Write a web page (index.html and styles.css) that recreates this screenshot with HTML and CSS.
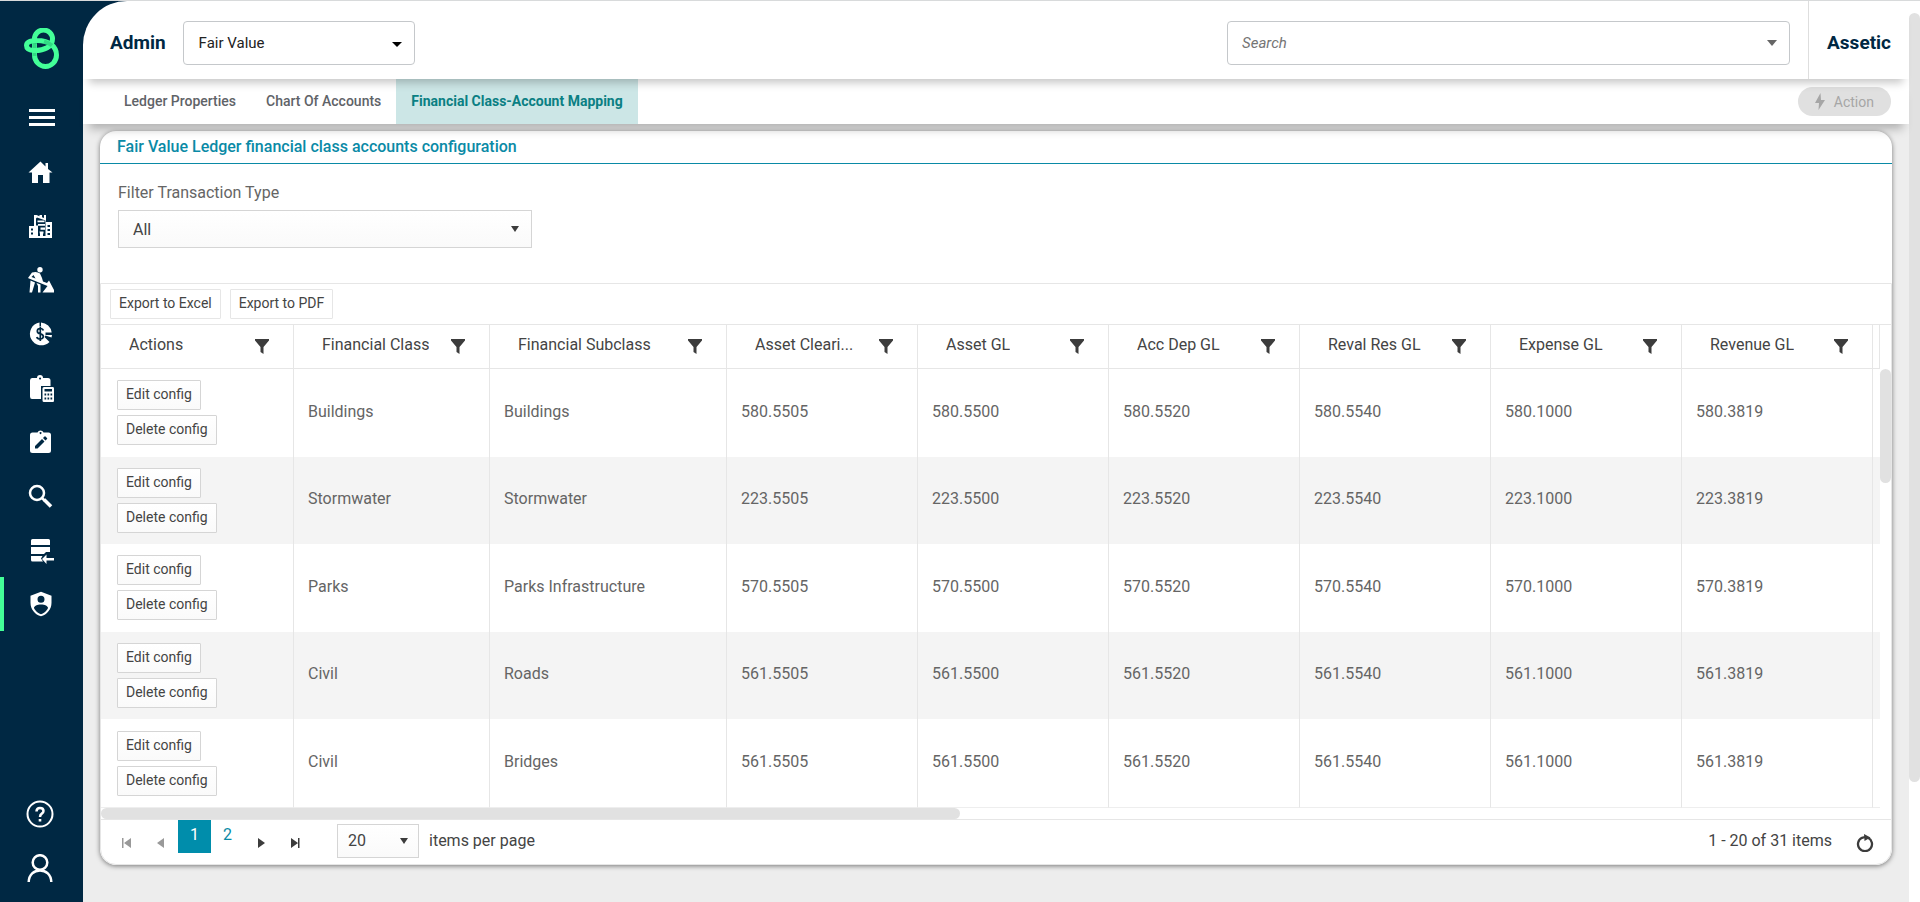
FILE: index.html
```html
<!DOCTYPE html>
<html lang="en">
  <head>
    <meta charset="utf-8" />
    <meta name="viewport" content="width=device-width, initial-scale=1" />
    <title>Assetic - Financial Class-Account Mapping</title>
    <link rel="stylesheet" href="styles.css">
  </head>

  <body>
    <aside class="sidebar">
      <a class="logo" href="#" aria-label="Home">
        <svg width="36" height="42" viewBox="0 0 36 42" fill="none" stroke="#43ff98" stroke-width="5">
          <path d="M10.500 27V11A9 9 0 0 1 28.500 11C28.500 19 20 22.500 11 22.500C6 22.500 2.500 21 2.500 17.500C2.500 14 7 12.500 13 12.500C26 12.500 32.500 19 32.500 27A11 11.500 0 0 1 10.500 27" />
          <path d="M10.500 15v5M20 13.500q5 1.500 8 4M10.500 25v3" stroke="#1fae6c" stroke-width="4" opacity=".45" />
        </svg>
      </a>
      <nav class="nav">
        <a class="nav-item" href="#" aria-label="Menu">
          <svg width="28" height="28" viewBox="0 0 28 28"><path d="M1 5h26v3H1zM1 12h26v3H1zM1 19h26v3H1z" /></svg>
        </a>
        <a class="nav-item" href="#" aria-label="Dashboard">
          <svg width="28" height="28" viewBox="0 0 28 28"><path d="M13.500 3.500l5 5V5H21v6l4.500 3.500h-3V25H16v-8h-5v8H5V14.500H1.500z" /></svg>
        </a>
        <a class="nav-item" href="#" aria-label="Assets">
          <svg width="28" height="28" viewBox="0 0 28 28">
            <path fill-rule="evenodd" d="M2 14h5V3h2.500l3 1.200V3H15v2.200l2 .8V3h2v7h6v16H2zM4 16.500v2h2v-2zM4 20.500v2h2v-2zM9 6.500v7h2v10.500h2V20h3v4h2.500V8.500L10 5.500zM20.500 13v2h2.500v-2zM20.500 17v2h2.500v-2zM20.500 21v2h2.500v-2z" />
            <path d="M10.500 8.500h7v1.700h-7zM11 12h7v1.800h-7zM13.500 15.500H18v2.300h-4.500zM12.500 19.500h4v2h-1V25h-2z" />
          </svg>
        </a>
        <a class="nav-item" href="#" aria-label="Maintenance">
          <svg width="28" height="28" viewBox="0 0 28 28">
            <circle cx="13" cy="3.800" r="2.700" />
            <path fill-rule="evenodd" d="M1 12L5 6.500q5-1.500 8 1l2 4.500 1 3.500 4 1.500 2-2.500 5 9.500v2.500H15.500l5-6.500L2 12.500zM4.500 11l4 1.500-2-3.500z" />
            <path d="M3.500 14.500l4.500 2L5 26.500H2.500zM9.500 17l4 1.500v8H11V20z" />
          </svg>
        </a>
        <a class="nav-item" href="#" aria-label="Finance">
          <svg width="28" height="28" viewBox="0 0 28 28">
            <path d="M12.500 2.500v3.500H14V2.500a11.500 11.500 0 0 1 10.700 10H18.500v2.500H25l-.5 2.500-6-2-1 1.500 5 5A11.500 11.500 0 1 1 12.500 2.500z" />
            <path d="M16.300 10.500q-.5-2-3-2-3 0-3 2.500t3 2.800q3 .5 3 2.700t-3 2.500q-3 0-3.500-2M13.300 6.500v14.500" fill="none" stroke="#002843" stroke-width="1.700" />
          </svg>
        </a>
        <a class="nav-item" href="#" aria-label="Valuations">
          <svg width="28" height="28" viewBox="0 0 28 28">
            <path fill-rule="evenodd" d="M5 4h5a3 3 0 0 1 6 0h5q2.500 0 2.500 2.500V12H14v13H5q-2 0-2-2.500v-16Q3 4 5 4zM13 3.500a1 1 0 1 0 .1 0z" />
            <path fill-rule="evenodd" d="M17 13h9q1 0 1 1.500v12q0 1.500-1 1.500h-9q-1.500 0-1.500-1.500v-12q0-1.500 1.500-1.500zM17.500 15v2.500H25V15zM17.500 19.500v2h1.700v-2zM20.500 19.500v2h1.700v-2zM23.500 19.500v2h1.700v-2zM17.500 23.500v2h1.700v-2zM20.500 23.500v2h1.700v-2zM23.500 23.500v2h1.700v-2z" />
          </svg>
        </a>
        <a class="nav-item" href="#" aria-label="Assessments">
          <svg width="28" height="28" viewBox="0 0 28 28">
            <path fill-rule="evenodd" d="M5.500 4.500h5a3.300 3.300 0 0 1 6 0h5Q24 4.500 24 7v15.500q0 2.500-2.500 2.500h-16Q3 25 3 22.500V7q0-2.500 2.500-2.500zM13.500 4a1 1 0 1 0 .1 0zM8 18v2.500h2.500l7-7L15 11zM16 10l2.500 2.500 1.500-1.500q.5-.5 0-1l-1.500-1.500q-.5-.5-1 0z" />
          </svg>
        </a>
        <a class="nav-item" href="#" aria-label="Search">
          <svg width="28" height="28" viewBox="0 0 28 28" fill="none" stroke="#fff">
            <circle cx="10" cy="11" r="7" stroke-width="2.500" />
            <path d="M14.500 15.500l3 3" stroke-width="2.500" /><path d="M17 17.500l7 7" stroke-width="3.500" />
          </svg>
        </a>
        <a class="nav-item" href="#" aria-label="Data import">
          <svg width="28" height="28" viewBox="0 0 28 28">
            <path d="M5.500 3h16q1.500 0 1.500 1.500V9H4V4.500Q4 3 5.500 3zM4 11h19v5h-4l-2 2H4zM4 20h11.500L14 22.500l2 3H5.500Q4 25.500 4 24zM19.500 18.500v3.500H27v2.500h-7.500V28L15 23z" />
          </svg>
        </a>
        <a class="nav-item active" href="#" aria-label="Admin">
          <svg width="28" height="28" viewBox="0 0 24 24">
            <path d="M12,1.500L3,5V11C3,16.550 6.840,21.300 12,22.500C17.160,21.300 21,16.550 21,11V5L12,1.500M12,5A3,3 0 0,1 15,8A3,3 0 0,1 12,11A3,3 0 0,1 9,8A3,3 0 0,1 12,5M17.130,17C15.920,18.850 14.110,20.100 12,20.700C9.870,20.100 8.060,18.850 6.870,17C6.530,16.500 6.240,16 6,15.470C6,13.820 8.710,12.470 12,12.470C15.290,12.470 18,13.790 18,15.470C17.760,16 17.470,16.500 17.130,17Z" />
          </svg>
        </a>
      </nav>
      <nav class="nav nav-bottom">
        <a class="nav-item" href="#" aria-label="Help">
          <svg width="28" height="28" viewBox="0 0 28 28" fill="none" stroke="#fff" stroke-width="2">
            <circle cx="14" cy="14" r="12.500" />
            <path d="M10.500 11.500q0-3.500 3.500-3.500t3.500 3q0 1.500-1.700 2.600T14 17" stroke-width="2.500" /><path d="M12.700 19h2.600v2.500h-2.600z" fill="#fff" stroke="none" />
          </svg>
        </a>
        <a class="nav-item" href="#" aria-label="Profile">
          <svg width="28" height="28" viewBox="0 0 28 28" fill="none" stroke="#fff" stroke-width="2.500">
            <circle cx="14" cy="8.500" r="7.300" />
            <path d="M2.700 28C3 20.500 8 16.500 14 16.500S25 20.500 25.300 28" />
          </svg>
        </a>
      </nav>
    </aside>

    <div class="page">
      <div class="header-wrap">
        <header class="header">
          <h1>Admin</h1>
          <div class="select ledger-select">
            <select aria-label="Ledger">
              <option>Fair Value</option>
            </select>
          </div>
          <div class="select search-box">
            <input type="text" placeholder="Search" aria-label="Search">
          </div>
          <div class="brand">Assetic</div>
        </header>
      </div>

      <div class="tabbar">
        <nav class="tabs">
          <a href="#">Ledger Properties</a>
          <a href="#">Chart Of Accounts</a>
          <a href="#" class="active">Financial Class-Account Mapping</a>
        </nav>
        <button type="button" class="action-btn" disabled>
          <svg width="10" height="17" viewBox="0 0 10 17"><path d="M5.500 0L0 10h4l-.5 7L10 7H6z" /></svg>
          Action
        </button>
      </div>

      <main class="content">
        <section class="panel">
          <h2>Fair Value Ledger financial class accounts configuration</h2>

          <div class="filter">
            <label for="transaction-type">Filter Transaction Type</label>
            <div class="select type-select">
              <select id="transaction-type">
                <option>All</option>
              </select>
            </div>
          </div>

          <div class="grid">
            <div class="toolbar">
              <button type="button" class="btn">Export to Excel</button>
              <button type="button" class="btn">Export to PDF</button>
            </div>

            <div class="table-wrap">
              <table>
                <colgroup>
                  <col class="col-actions">
                  <col class="col-class">
                  <col class="col-subclass">
                  <col class="col-gl" span="6">
                  <col class="col-rest">
                </colgroup>
                <thead>
                  <tr>
                    <th><div class="th"><span>Actions</span><svg class="funnel" viewBox="0 0 14 15"><path d="M0 0h14v1.500L8.500 8v7l-3-2V8L0 1.500z" /></svg></div></th>
                    <th><div class="th"><span>Financial Class</span><svg class="funnel" viewBox="0 0 14 15"><path d="M0 0h14v1.500L8.500 8v7l-3-2V8L0 1.500z" /></svg></div></th>
                    <th><div class="th"><span>Financial Subclass</span><svg class="funnel" viewBox="0 0 14 15"><path d="M0 0h14v1.500L8.500 8v7l-3-2V8L0 1.500z" /></svg></div></th>
                    <th><div class="th"><span>Asset Cleari...</span><svg class="funnel" viewBox="0 0 14 15"><path d="M0 0h14v1.500L8.500 8v7l-3-2V8L0 1.500z" /></svg></div></th>
                    <th><div class="th"><span>Asset GL</span><svg class="funnel" viewBox="0 0 14 15"><path d="M0 0h14v1.500L8.500 8v7l-3-2V8L0 1.500z" /></svg></div></th>
                    <th><div class="th"><span>Acc Dep GL</span><svg class="funnel" viewBox="0 0 14 15"><path d="M0 0h14v1.500L8.500 8v7l-3-2V8L0 1.500z" /></svg></div></th>
                    <th><div class="th"><span>Reval Res GL</span><svg class="funnel" viewBox="0 0 14 15"><path d="M0 0h14v1.500L8.500 8v7l-3-2V8L0 1.500z" /></svg></div></th>
                    <th><div class="th"><span>Expense GL</span><svg class="funnel" viewBox="0 0 14 15"><path d="M0 0h14v1.500L8.500 8v7l-3-2V8L0 1.500z" /></svg></div></th>
                    <th><div class="th"><span>Revenue GL</span><svg class="funnel" viewBox="0 0 14 15"><path d="M0 0h14v1.500L8.500 8v7l-3-2V8L0 1.500z" /></svg></div></th>
                    <th></th>
                  </tr>
                </thead>
                <tbody>
                  <tr>
                    <td class="actions"><button type="button" class="btn">Edit config</button><button type="button" class="btn">Delete config</button></td>
                    <td>Buildings</td><td>Buildings</td>
                    <td>580.5505</td><td>580.5500</td><td>580.5520</td><td>580.5540</td><td>580.1000</td><td>580.3819</td><td></td>
                  </tr>
                  <tr>
                    <td class="actions"><button type="button" class="btn">Edit config</button><button type="button" class="btn">Delete config</button></td>
                    <td>Stormwater</td><td>Stormwater</td>
                    <td>223.5505</td><td>223.5500</td><td>223.5520</td><td>223.5540</td><td>223.1000</td><td>223.3819</td><td></td>
                  </tr>
                  <tr>
                    <td class="actions"><button type="button" class="btn">Edit config</button><button type="button" class="btn">Delete config</button></td>
                    <td>Parks</td><td>Parks Infrastructure</td>
                    <td>570.5505</td><td>570.5500</td><td>570.5520</td><td>570.5540</td><td>570.1000</td><td>570.3819</td><td></td>
                  </tr>
                  <tr>
                    <td class="actions"><button type="button" class="btn">Edit config</button><button type="button" class="btn">Delete config</button></td>
                    <td>Civil</td><td>Roads</td>
                    <td>561.5505</td><td>561.5500</td><td>561.5520</td><td>561.5540</td><td>561.1000</td><td>561.3819</td><td></td>
                  </tr>
                  <tr>
                    <td class="actions"><button type="button" class="btn">Edit config</button><button type="button" class="btn">Delete config</button></td>
                    <td>Civil</td><td>Bridges</td>
                    <td>561.5505</td><td>561.5500</td><td>561.5520</td><td>561.5540</td><td>561.1000</td><td>561.3819</td><td></td>
                  </tr>
                </tbody>
              </table>
              <div class="vscroll"><div class="thumb"></div></div>
            </div>
            <div class="hscroll"><div class="thumb"></div></div>

            <div class="pager">
              <button type="button" class="page-btn" disabled aria-label="First page"><svg width="10" height="10" viewBox="0 0 10 10"><path d="M0 0h1.500v10H0zM9 0v10L2 5z" /></svg></button>
              <button type="button" class="page-btn" disabled aria-label="Previous page"><svg width="10" height="10" viewBox="0 0 10 10"><path d="M8 0v10L1 5z" /></svg></button>
              <a href="#" class="page-num current">1</a>
              <a href="#" class="page-num">2</a>
              <button type="button" class="page-btn" aria-label="Next page"><svg width="10" height="10" viewBox="0 0 10 10"><path d="M2 0v10l7-5z" /></svg></button>
              <button type="button" class="page-btn" aria-label="Last page"><svg width="10" height="10" viewBox="0 0 10 10"><path d="M1 0v10l7-5zM8 0h1.500v10H8z" /></svg></button>
              <div class="select size-select">
                <select id="page-size">
                  <option>20</option>
                </select>
              </div>
              <label for="page-size">items per page</label>
              <span class="info">1 - 20 of 31 items</span>
              <button type="button" class="refresh" aria-label="Refresh">
                <svg width="18" height="18" viewBox="0 0 18 18"><path d="M12 3.800A7 7 0 1 1 6 3.800L9 3" fill="none" stroke="#3c3c3c" stroke-width="2.300" /><path d="M8 0l6.500 3.500L8.500 7z" fill="#3c3c3c" /></svg>
              </button>
            </div>
          </div>
        </section>
      </main>
    </div>

    <div class="page-scroll"><div class="thumb"></div></div>
  </body>
</html>
```
FILE: styles.css
```css
* {
  box-sizing: border-box;
}
body {
  display: flex;
  min-height: 100vh;
  margin: 0;
  border-top: 1px solid #d8dadb;
  background: #ededed;
  color: #656565;
  font-family: Roboto, sans-serif;
  font-size: 16px;
  line-height: 20px;
}
h1,
h2 {
  margin: 0;
}
a {
  text-decoration: none;
}
button,
input,
select {
  font-family: inherit;
}

/* sidebar */
.sidebar {
  display: flex;
  flex-direction: column;
  flex: none;
  width: 83px;
  background: #002843;
}
.logo {
  height: 90px;
  padding: 27px 0 0 24px;
}
.logo svg {
  display: block;
}
.nav-item {
  display: flex;
  align-items: center;
  height: 54px;
  padding-left: 27px;
  fill: #fff;
}
.nav-item:first-child {
  padding-left: 28px;
}
.nav-item.active {
  border-left: 4px solid #43ff98;
  padding-left: 23px;
}
.nav-bottom {
  margin-top: auto;
  padding-bottom: 7px;
}
.nav-bottom .nav-item {
  padding-left: 26px;
}

/* header */
.page {
  display: flex;
  flex-direction: column;
  flex: 1;
  min-width: 0;
}
.header-wrap {
  position: relative;
  z-index: 2;
  background: linear-gradient(90deg, #002843 50%, #fff 50%);
}
.header {
  display: flex;
  align-items: center;
  height: 78px;
  padding: 6px 18px 0 27px;
  border-radius: 44px 0 0 0;
  background: #fff;
  box-shadow: 0 10px 9px -6px rgba(0, 0, 0, 0.22);
}
.header h1,
.brand {
  color: #002843;
  font-size: 19px;
  font-weight: 700;
}
.select {
  position: relative;
}
.select::after {
  content: '';
  position: absolute;
  top: 50%;
  right: 13px;
  margin-top: -3px;
  border: 4px solid transparent;
  border-top: 6px solid #3c3c3c;
  border-bottom: 0;
  pointer-events: none;
}
.select select,
.select input {
  display: block;
  width: 100%;
  height: 100%;
  margin: 0;
  border: 1px solid #c5c8cb;
  border-radius: 4px;
  background: #fff;
  appearance: none;
  outline: none;
}
.ledger-select {
  width: 232px;
  height: 44px;
  margin-left: 17px;
}
.ledger-select select {
  padding: 0 15px;
  color: #222;
  font-size: 15px;
}
.ledger-select::after {
  margin-top: -1px;
  border-width: 5px 5px 0;
  border-top-color: #000;
}
.search-box {
  width: 563px;
  height: 44px;
  margin-left: auto;
}
.search-box input {
  padding: 0 14px;
  font-size: 15px;
}
.search-box input::placeholder {
  color: #757575;
  font-style: italic;
}
.search-box::after {
  border-width: 6px 5px 0;
  border-top-color: #666;
}
.brand {
  align-self: stretch;
  display: flex;
  align-items: center;
  margin: -6px 0 0 18px;
  padding: 6px 0 0 18px;
  border-left: 1px solid #dedede;
}

/* tabs */
.tabbar {
  position: relative;
  z-index: 1;
  display: flex;
  align-items: center;
  justify-content: space-between;
  height: 45px;
  padding: 0 18px 0 26px;
  background: #fff;
  box-shadow: 0 11px 9px -6px rgba(0, 0, 0, 0.25);
}
.tabs {
  display: flex;
  align-self: stretch;
}
.tabs a {
  padding: 12px 15px 0;
  color: #5f6368;
  font-size: 14px;
  font-weight: 500;
}
.tabs a.active {
  background: #cce6e6;
  color: #0a7f83;
  font-weight: 700;
}
.action-btn {
  display: flex;
  align-items: center;
  gap: 9px;
  height: 29px;
  padding: 0 17px;
  border: 0;
  border-radius: 15px;
  background: #e0e0e0;
  color: #a6a6a6;
  fill: #a6a6a6;
  font-size: 14px;
}

/* panel */
.content {
  padding: 7px 17px 36px;
}
.panel {
  overflow: hidden;
  border-radius: 16px;
  background: #fff;
  box-shadow: 0 1px 5px rgba(0, 0, 0, 0.5);
}
.panel h2 {
  height: 33px;
  padding: 6px 17px 0;
  border-bottom: 1px solid #0a8aa6;
  color: #0a8aa6;
  font-size: 16px;
  font-weight: 500;
}
.filter {
  padding: 19px 18px 35px;
}
.filter label {
  display: block;
}
.type-select {
  width: 414px;
  height: 38px;
  margin-top: 7px;
}
.type-select select,
.size-select select {
  padding: 1px 14px 0;
  border-color: #d5d5d5;
  border-radius: 0;
  background: linear-gradient(#fff, #fafafa);
  color: #444;
  font-size: 16px;
}

/* grid */
.grid {
  border: 1px solid #e6e6e6;
  border-radius: 0 0 16px 16px;
}
.toolbar {
  display: flex;
  gap: 9px;
  height: 40px;
  padding: 5px 9px;
}
.btn {
  height: 30px;
  padding: 0 8px 2px;
  border: 1px solid #d5d5d5;
  border-radius: 1px;
  background: linear-gradient(#fff, #fafafa);
  color: #444;
  font-size: 14px;
}
.toolbar .btn {
  border-color: #e6e6e6;
  background: #fff;
}
.table-wrap {
  display: flex;
}
table {
  flex: 1;
  width: 100%;
  height: 484px;
  border-collapse: separate;
  border-spacing: 0;
  table-layout: fixed;
}
.col-actions {
  width: 193px;
}
.col-class {
  width: 196px;
}
.col-subclass {
  width: 237px;
}
.col-gl {
  width: 191px;
}
.col-rest {
  width: 7px;
}
th {
  height: 45px;
  padding: 0;
  border: solid #e6e6e6;
  border-width: 1px 1px 1px 0;
  color: #444;
  font-weight: 400;
  text-align: left;
}
.th {
  display: flex;
  align-items: center;
  justify-content: space-between;
  gap: 16px;
  padding: 0 24px 0 28px;
}
.th span {
  overflow: hidden;
  padding-bottom: 4px;
  text-overflow: ellipsis;
  white-space: nowrap;
}
.funnel {
  flex: none;
  width: 14px;
  height: 15px;
  fill: #3c3c3c;
}
td {
  padding: 0 14px 2px;
  border-right: 1px solid #e6e6e6;
}
td:last-child {
  padding: 0;
  border-right: 0;
}
tbody tr:nth-child(even) {
  background: #f4f4f4;
}
tbody tr:last-child td {
  border-bottom: 1px solid #eee;
}
td.actions {
  padding: 0 16px;
}
td.actions .btn {
  display: block;
}
td.actions .btn + .btn {
  margin-top: 5px;
}
.thumb {
  border-radius: 6px;
  background: #e1e1e1;
}
.vscroll {
  flex: none;
  width: 11px;
  border-top: 1px solid #e6e6e6;
}
.vscroll .thumb {
  height: 114px;
  margin-top: 44px;
}
.hscroll .thumb {
  width: 48%;
  height: 11px;
}

/* pager */
.pager {
  display: flex;
  align-items: center;
  height: 45px;
  padding: 0 17px 2px 9px;
  border-top: 1px solid #e6e6e6;
  color: #444;
}
.page-btn,
.refresh {
  display: flex;
  align-items: center;
  justify-content: center;
  width: 34px;
  height: 34px;
  padding: 4px 0 0;
  border: 0;
  background: none;
  fill: #3c3c3c;
}
.page-btn:disabled {
  fill: #999;
}
.page-num {
  align-self: flex-start;
  width: 33px;
  height: 33px;
  color: #0a8aa6;
  line-height: 30px;
  text-align: center;
}
.page-num.current {
  background: #008dab;
  color: #fff;
}
.size-select {
  width: 82px;
  height: 34px;
  margin: 0 10px 0 25px;
}
.size-select select {
  padding: 0 10px 1px;
}
.size-select::after {
  right: 11px;
}
.info {
  margin-left: auto;
}
.refresh {
  width: 18px;
  margin-left: 24px;
}

/* window scrollbar */
.page-scroll {
  flex: none;
  width: 11px;
  padding-top: 12px;
  background: #fff;
}
.page-scroll .thumb {
  height: 769px;
}
```
